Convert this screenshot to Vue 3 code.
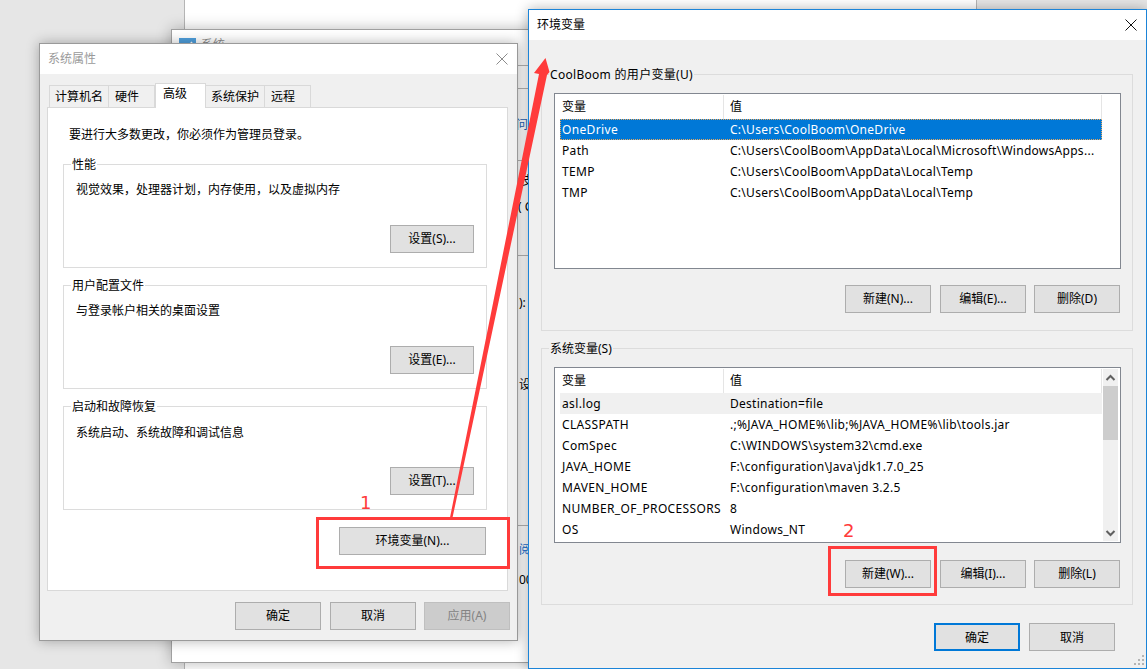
<script setup>
const comma = '\uFF0C'
const intro = `要进行大多数更改${comma}你必须作为管理员登录。`
const tabs = ['计算机名', '硬件', '高级', '系统保护', '远程']
const perfGroups = [
  { title: '性能', text: `视觉效果${comma}处理器计划${comma}内存使用${comma}以及虚拟内存`, btn: '设置(S)...' },
  { title: '用户配置文件', text: '与登录帐户相关的桌面设置', btn: '设置(E)...' },
  { title: '启动和故障恢复', text: '系统启动、系统故障和调试信息', btn: '设置(T)...' },
]
const userVars = [
  ['OneDrive', 'C:\\Users\\CoolBoom\\OneDrive'],
  ['Path', 'C:\\Users\\CoolBoom\\AppData\\Local\\Microsoft\\WindowsApps...'],
  ['TEMP', 'C:\\Users\\CoolBoom\\AppData\\Local\\Temp'],
  ['TMP', 'C:\\Users\\CoolBoom\\AppData\\Local\\Temp'],
]
const sysVars = [
  ['asl.log', 'Destination=file'],
  ['CLASSPATH', '.;%JAVA_HOME%\\lib;%JAVA_HOME%\\lib\\tools.jar'],
  ['ComSpec', 'C:\\WINDOWS\\system32\\cmd.exe'],
  ['JAVA_HOME', 'F:\\configuration\\Java\\jdk1.7.0_25'],
  ['MAVEN_HOME', 'F:\\configuration\\maven 3.2.5'],
  ['NUMBER_OF_PROCESSORS', '8'],
  ['OS', 'Windows_NT'],
]
const peeks = [
  { cls: 'p1', t: '问基' }, { cls: 'p2', t: '支' }, { cls: 'p3', t: '( C' }, { cls: 'p4', t: '):' },
  { cls: 'p5', t: '设' }, { cls: 'p6', t: '阅' }, { cls: 'p7', t: '00' },
]
const lines = ['l1', 'l2', 'l3', 'l4', 'l5']
</script>

<template>
  <div class="desktop">
    <div class="win-far"></div>

    <div class="win-back">
      <div class="back-title">
        <svg class="back-icon" width="17" height="14" viewBox="0 0 17 14">
          <rect width="17" height="14" fill="#4f9fdc" />
          <path d="M5 7l3 3 5-6" fill="none" stroke="#fff" stroke-width="1.6" />
        </svg>
        <span>系统</span>
      </div>
      <i v-for="l in lines" :key="l" class="rule" :class="l"></i>
      <span v-for="p in peeks" :key="p.cls" class="peek" :class="p.cls">{{ p.t }}</span>
    </div>

    <section class="dlg-sys">
      <header class="title muted">
        <span>系统属性</span>
        <svg width="12" height="12" viewBox="0 0 12 12"><path d="M.5.5l11 11M11.5.5l-11 11" stroke="#8c8c8c" fill="none" /></svg>
      </header>
      <div class="sys-body">
        <nav class="tabs">
          <span v-for="(t, i) in tabs" :key="t" class="tab" :class="{ active: i === 2 }">{{ t }}</span>
        </nav>
        <div class="panel">
          <p class="intro">{{ intro }}</p>
          <div v-for="g in perfGroups" :key="g.title" class="perf-group">
            <span class="legend white">{{ g.title }}</span>
            <p class="perf-text">{{ g.text }}</p>
            <button class="btn setting">{{ g.btn }}</button>
          </div>
          <button class="btn env">环境变量(N)...</button>
        </div>
        <div class="sys-actions">
          <button class="btn wide">确定</button>
          <button class="btn wide">取消</button>
          <button class="btn wide disabled">应用(A)</button>
        </div>
      </div>
    </section>

    <section class="dlg-env">
      <header class="title">
        <span>环境变量</span>
        <svg width="12" height="12" viewBox="0 0 12 12"><path d="M.5.5l11 11M11.5.5l-11 11" stroke="#111" fill="none" /></svg>
      </header>
      <div class="env-body">
        <div class="var-group">
          <span class="legend grey spaced">CoolBoom 的用户变量(U)</span>
          <div class="listbox">
            <div class="list-main">
              <div class="list-head"><span class="hn">变量</span><span class="hv">值</span></div>
              <div v-for="(r, i) in userVars" :key="r[0]" class="row" :class="{ selected: i === 0 }">
                <span class="cn">{{ r[0] }}</span><span class="cv">{{ r[1] }}</span>
              </div>
            </div>
          </div>
          <div class="var-actions">
            <button class="btn mid">新建(N)...</button>
            <button class="btn mid">编辑(E)...</button>
            <button class="btn mid">删除(D)</button>
          </div>
        </div>

        <div class="var-group second">
          <span class="legend grey">系统变量(S)</span>
          <div class="listbox">
            <div class="list-main">
              <div class="list-head"><span class="hn">变量</span><span class="hv">值</span></div>
              <div v-for="(r, i) in sysVars" :key="r[0]" class="row" :class="{ hover: i === 0 }">
                <span class="cn">{{ r[0] }}</span><span class="cv">{{ r[1] }}</span>
              </div>
            </div>
            <div class="scrollbar">
              <svg width="15" height="17" viewBox="0 0 15 17"><path d="M3.5 11l4-4 4 4" fill="none" stroke="#606060" stroke-width="2" /></svg>
              <div class="thumb"></div>
              <svg class="down" width="15" height="17" viewBox="0 0 15 17"><path d="M3.5 7l4 4 4-4" fill="none" stroke="#606060" stroke-width="2" /></svg>
            </div>
          </div>
          <div class="var-actions">
            <button class="btn mid">新建(W)...</button>
            <button class="btn mid">编辑(I)...</button>
            <button class="btn mid">删除(L)</button>
          </div>
        </div>

        <div class="env-actions">
          <button class="btn mid primary">确定</button>
          <button class="btn mid">取消</button>
        </div>
      </div>
      <svg class="grip" width="11" height="11" viewBox="0 0 11 11" fill="#b4b4b4">
        <rect x="8" y="0" width="2" height="2" /><rect x="4" y="4" width="2" height="2" /><rect x="8" y="4" width="2" height="2" />
        <rect x="0" y="8" width="2" height="2" /><rect x="4" y="8" width="2" height="2" /><rect x="8" y="8" width="2" height="2" />
      </svg>
    </section>

    <svg class="arrow" width="1147" height="669" viewBox="0 0 1147 669">
      <polygon points="545.5,58 549.5,72 547,75 452,520 449.5,520 539,74 534,73" fill="#ff3b3b" />
    </svg>
    <div class="mark mark-env"></div>
    <div class="mark mark-new"></div>
    <span class="num num1">1</span>
    <span class="num num2">2</span>
  </div>
</template>

<style>
html, body { margin: 0; padding: 0; overflow: hidden; }
</style>

<style scoped>
.desktop {
  position: relative; width: 1147px; height: 669px; overflow: hidden; background: #e6e6e6;
  font: 12px/16px "Noto Sans", "Noto Sans CJK SC", sans-serif; color: #000;
}
p { margin: 0; }
.win-far { position: absolute; left: 184px; top: -2px; width: 793px; height: 680px; background: #fff; border: 1px solid #b5b5b5; box-sizing: border-box; }
.win-back { position: absolute; left: 171px; top: 29px; width: 900px; height: 634px; box-sizing: border-box; background: #fff; border: 1px solid #a0a0a0; box-shadow: 0 0 14px rgba(0,0,0,.28); }
.back-title { display: flex; align-items: center; gap: 5px; padding: 7px 0 0 7px; color: #8a8a8a; }
.rule { position: absolute; left: 340px; width: 30px; height: 1px; background: #b4b4b4; }
.l1 { top: 35px; } .l2 { top: 58px; } .l3 { top: 130px; } .l4 { top: 225px; } .l5 { top: 495px; }
.peek { position: absolute; white-space: nowrap; }
.p1 { left: 344px; top: 87px; color: #1a5fb4; }
.p2 { left: 350px; top: 143px; }
.p3 { left: 346px; top: 169px; }
.p4 { left: 347px; top: 265px; }
.p5 { left: 347px; top: 347px; }
.p6 { left: 347px; top: 512px; color: #1a6fd0; }
.p7 { left: 347px; top: 542px; }

.dlg-sys { position: absolute; left: 39px; top: 43px; width: 479px; height: 598px; box-sizing: border-box; border: 1px solid #9a9a9a; background: #f0f0f0; display: flex; flex-direction: column; box-shadow: 0 0 12px rgba(0,0,0,.3); }
.title { height: 30px; flex: none; background: #fff; display: flex; align-items: center; justify-content: space-between; padding: 0 9px 0 8px; font-size: 12px; }
.muted { color: #9a9a9a; }
.sys-body { flex: 1; display: flex; flex-direction: column; padding: 11px 7px 0 7px; }
.tabs { display: flex; margin-left: 2px; height: 22px; align-items: flex-end; position: relative; z-index: 1; }
.tab { height: 22px; box-sizing: border-box; border: 1px solid #d9d9d9; border-bottom: 0; border-left: 0; padding: 3px 5px 0 5px; background: #f0f0f0; }
.tab:first-child { border-left: 1px solid #d9d9d9; }
.tab:nth-child(2) { padding: 3px 15px 0 6px; }
.tab:nth-child(3) { height: 25px; margin-bottom: -1px; padding: 2px 18px 0 7px; background: #fff; border-top: 1px solid #d9d9d9; border-left: 1px solid #d9d9d9; border-bottom: 0; }
.tab:nth-child(5) { padding: 3px 15px 0 6px; }
.panel { width: 461px; height: 484px; box-sizing: border-box; background: #fff; border: 1px solid #d9d9d9; padding: 19px 20px 0 15px; display: flex; flex-direction: column; }
.intro { margin: 0 0 21px 6px; }
.perf-group { position: relative; height: 104px; box-sizing: border-box; border: 1px solid #dcdcdc; margin-bottom: 17px; padding: 17px 12px 14px 12px; display: flex; flex-direction: column; justify-content: space-between; }
.perf-group:nth-of-type(3) { padding-top: 18px; }
.legend { position: absolute; left: 7px; top: -8px; padding: 0 1px; white-space: nowrap; }
.white { background: #fff; }
.grey { background: #f0f0f0; }
.spaced { letter-spacing: .3px; }
.perf-text { line-height: 16px; }
.btn { box-sizing: border-box; height: 28px; padding: 0; border: 1px solid #adadad; background: #e1e1e1; color: #000; font: inherit; text-align: center; }
.setting { width: 84px; align-self: flex-end; }
.env { width: 147px; align-self: flex-end; margin-right: 1px; }
.sys-actions { display: flex; justify-content: flex-end; gap: 9px; margin-top: 11px; }
.wide { width: 86px; }
.wide:last-child { margin-left: -1px; }
.disabled { background: #ccc; border-color: #bfbfbf; color: #838383; }

.dlg-env { position: absolute; left: 528px; top: 9px; width: 619px; height: 660px; box-sizing: border-box; border: 1px solid #1b84d8; background: #f0f0f0; display: flex; flex-direction: column; box-shadow: 0 0 12px rgba(0,0,0,.3); }
.env-body { flex: 1; padding: 34px 13px 0 12px; display: flex; flex-direction: column; }
.var-group { position: relative; height: 257px; box-sizing: border-box; border: 1px solid #dcdcdc; padding: 18px 12px 0 12px; }
.second { margin-top: 17px; }
.listbox { height: 176px; width: 567px; box-sizing: border-box; border: 1px solid #828790; background: #fff; display: flex; padding: 1px 2px 1px 5px; overflow: hidden; }
.list-main { width: 542px; flex: none; }
.list-head { display: flex; height: 24px; line-height: 23px; align-items: stretch; border-right: 1px solid #e5e5e5; box-sizing: border-box; width: 542px; margin-bottom: 0; }
.hn { width: 164px; padding-left: 2px; box-sizing: border-box; border-right: 1px solid #e5e5e5; }
.hv { padding-left: 6px; }
.row { display: flex; height: 21px; line-height: 21px; white-space: nowrap; box-sizing: border-box; }
.cn { width: 163px; flex: none; padding-left: 2px; box-sizing: border-box; letter-spacing: .35px; }
.cv { padding-left: 7px; letter-spacing: .28px; }
.selected { background: #0078d7; color: #fff; outline: 1px dotted #e8a860; outline-offset: -1px; }
.hover { background: #f0f0f0; }
.scrollbar { width: 15px; margin-left: 1px; background: #f0f0f0; display: flex; flex-direction: column; }
.thumb { height: 54px; background: #cdcdcd; }
.down { margin-top: auto; }
.var-actions { display: flex; justify-content: flex-end; gap: 8px; margin-top: 16px; }
.second .var-actions { margin-top: 17px; }
.mid { width: 86px; }
.mid:first-child { margin-right: 1px; }
.env-actions { display: flex; justify-content: flex-end; gap: 9px; margin-top: 18px; padding-right: 18px; }
.env-actions .mid:first-child { margin-right: 0; }
.primary { border: 2px solid #0078d7; padding-top: 1px; }
.env-actions .mid:last-child { padding-top: 1px; }
.grip { position: absolute; right: 1px; bottom: 2px; }

.arrow { position: absolute; left: 0; top: 0; pointer-events: none; }
.mark { position: absolute; box-sizing: border-box; border: 3px solid #ff3b3b; }
.mark-env { left: 316px; top: 517px; width: 194px; height: 52px; }
.mark-new { left: 828px; top: 546px; width: 109px; height: 50px; }
.num { position: absolute; font: 18px/20px "DejaVu Sans", sans-serif; color: #ff3b3b; }
.num1 { left: 360px; top: 493px; }
.num2 { left: 843px; top: 521px; }
</style>
